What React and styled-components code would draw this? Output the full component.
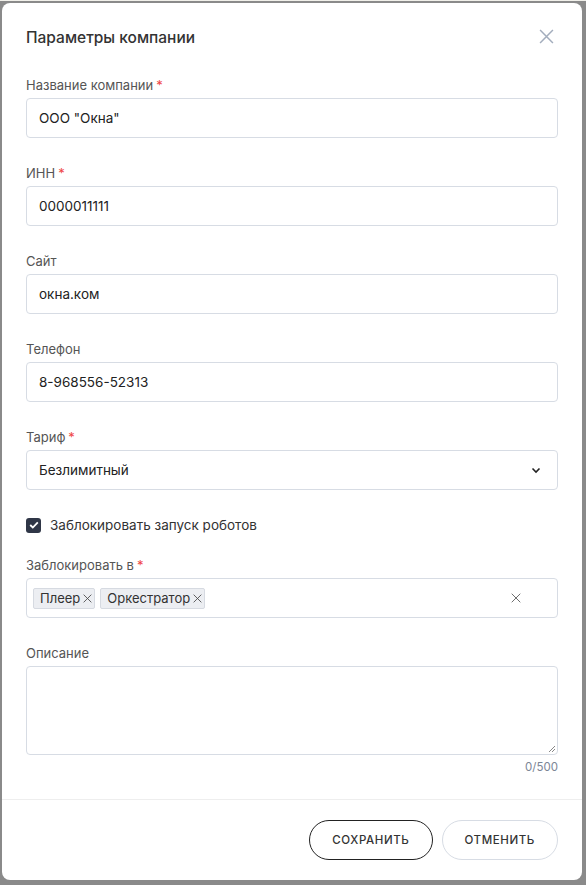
import React from 'react';
import styled, { createGlobalStyle } from 'styled-components';

const GlobalStyle = createGlobalStyle`
  html, body {
    margin: 0;
    padding: 0;
    background: #8a8a8a;
    font-family: 'Inter', 'Noto Sans', sans-serif;
  }
  * { box-sizing: border-box; }
`;

const Page = styled.div`
  width: 586px;
  height: 885px;
  padding: 2px 4px 5px 2px;
  background: #8a8a8a;
  border-top: 1px solid #f1f0ea;
`;

const Modal = styled.div`
  width: 580px;
  height: 877px;
  background: #fff;
  border-radius: 8px;
  display: flex;
  flex-direction: column;
`;

const Header = styled.div`
  display: flex;
  align-items: center;
  justify-content: space-between;
  padding: 23px 24px 0 24px;
  height: 47px;
`;

const Title = styled.h2`
  margin: 0;
  font-size: 15.5px;
  font-weight: 500;
  color: #333;
  line-height: 24px;
`;

const CloseBtn = styled.button`
  border: none;
  background: none;
  padding: 0;
  width: 18px;
  height: 18px;
  margin: -3px 3px 0 0;
  display: flex;
  align-items: center;
  justify-content: center;
  cursor: pointer;
`;

const Body = styled.div`
  flex: 1;
  padding: 25px 24px 0 24px;
  display: flex;
  flex-direction: column;
`;

const Field = styled.div`
  display: flex;
  flex-direction: column;
  margin-bottom: ${p => p.$mb ?? 25}px;
`;

const Label = styled.label`
  font-size: 13px;
  line-height: 20px;
  color: #555;
  margin-bottom: 3px;
`;

const Star = styled.span`
  color: #ef4444;
  margin-left: 3px;
`;

const Box = styled.div`
  height: 40px;
  border: 1px solid #d7dce4;
  border-radius: 4px;
  display: flex;
  align-items: center;
  padding: 0 ${p => p.$pr ?? 12}px 0 ${p => p.$pl ?? 12}px;
  font-size: 13.5px;
  color: #222;
  justify-content: space-between;
`;

const TextArea = styled.div`
  height: 89px;
  border: 1px solid #d7dce4;
  border-radius: 4px;
  position: relative;
`;

const Grip = styled.svg`
  position: absolute;
  right: 1px;
  bottom: 1px;
`;

const Counter = styled.div`
  text-align: right;
  font-size: 11.5px;
  color: #7c8696;
  margin-top: 4px;
  line-height: 16px;
`;

const CheckRow = styled.div`
  display: flex;
  align-items: center;
  gap: 9px;
  height: 20px;
  margin-top: 1px;
  margin-bottom: 20px;
  font-size: 13.5px;
  color: #333;
`;

const Check = styled.span`
  width: 15px;
  height: 15px;
  border-radius: 3px;
  background: #2f3647;
  display: flex;
  align-items: center;
  justify-content: center;
`;

const Tags = styled.div`
  display: flex;
  gap: 5px;
`;

const Tag = styled.span`
  display: inline-flex;
  align-items: center;
  height: 21px;
  padding: 0 2px 0 6px;
  background: #eceef2;
  border: 1px solid #d6dae1;
  border-radius: 2px;
  font-size: 13px;
  color: #333;
  gap: 3px;
`;

const Footer = styled.div`
  border-top: 1px solid #eeeeee;
  padding: 20px 24px 20px 24px;
  display: flex;
  justify-content: flex-end;
  gap: 9px;
`;

const Button = styled.button`
  height: 40px;
  padding: 0 ${p => p.$px}px;
  border-radius: 20px;
  border: 1px solid ${p => (p.$primary ? '#222' : '#d7dce4')};
  background: #fff;
  font-family: 'Inter', 'Noto Sans', sans-serif;
  font-size: 11.5px;
  font-weight: 500;
  letter-spacing: 0.6px;
  color: #333;
  text-transform: uppercase;
  cursor: pointer;
`;

const XIcon = ({ size = 14, color = '#333', sw = 1.3 }) => (
  <svg width={size} height={size} viewBox="0 0 14 14">
    <path d="M1 1 L13 13 M13 1 L1 13" stroke={color} strokeWidth={sw} fill="none" />
  </svg>
);

const TextField = ({ label, required, value }) => (
  <Field>
    <Label>
      {label}
      {required && <Star>*</Star>}
    </Label>
    <Box>{value}</Box>
  </Field>
);

export default function App() {
  return (
    <>
      <GlobalStyle />
      <Page>
        <Modal>
          <Header>
            <Title>Параметры компании</Title>
            <CloseBtn>
              <XIcon size={15} color="#a3adbd" sw={1.4} />
            </CloseBtn>
          </Header>
          <Body>
            <TextField label="Название компании" required value={'ООО "Окна"'} />
            <TextField label="ИНН" required value="0000011111" />
            <TextField label="Сайт" value="окна.ком" />
            <TextField label="Телефон" value="8-968556-52313" />
            <Field $mb={24}>
              <Label>
                Тариф<Star>*</Star>
              </Label>
              <Box $pr={16}>
                Безлимитный
                <svg width="10" height="7" viewBox="0 0 10 7">
                  <path d="M1.5 1.5 L5 5 L8.5 1.5" stroke="#222" strokeWidth="1.6" fill="none" />
                </svg>
              </Box>
            </Field>
            <CheckRow>
              <Check>
                <svg width="10" height="8" viewBox="0 0 10 8">
                  <path d="M1.2 4 L3.8 6.5 L8.8 1.3" stroke="#fff" strokeWidth="1.8" fill="none" />
                </svg>
              </Check>
              Заблокировать запуск роботов
            </CheckRow>
            <Field>
              <Label>
                Заблокировать в<Star>*</Star>
              </Label>
              <Box $pl={6} $pr={36}>
                <Tags>
                  <Tag>
                    Плеер <XIcon size={9} color="#444" sw={1.3} />
                  </Tag>
                  <Tag>
                    Оркестратор <XIcon size={9} color="#444" sw={1.3} />
                  </Tag>
                </Tags>
                <XIcon size={10} color="#555" sw={1.2} />
              </Box>
            </Field>
            <Field $mb={0}>
              <Label>Описание</Label>
              <TextArea>
                <Grip width="9" height="9" viewBox="0 0 9 9">
                  <path d="M8 2 L2 8 M8 5 L5 8" stroke="#888" strokeWidth="1" />
                </Grip>
              </TextArea>
              <Counter>0/500</Counter>
            </Field>
          </Body>
          <Footer>
            <Button $primary $px={22}>Сохранить</Button>
            <Button $px={22}>Отменить</Button>
          </Footer>
        </Modal>
      </Page>
    </>
  );
}
